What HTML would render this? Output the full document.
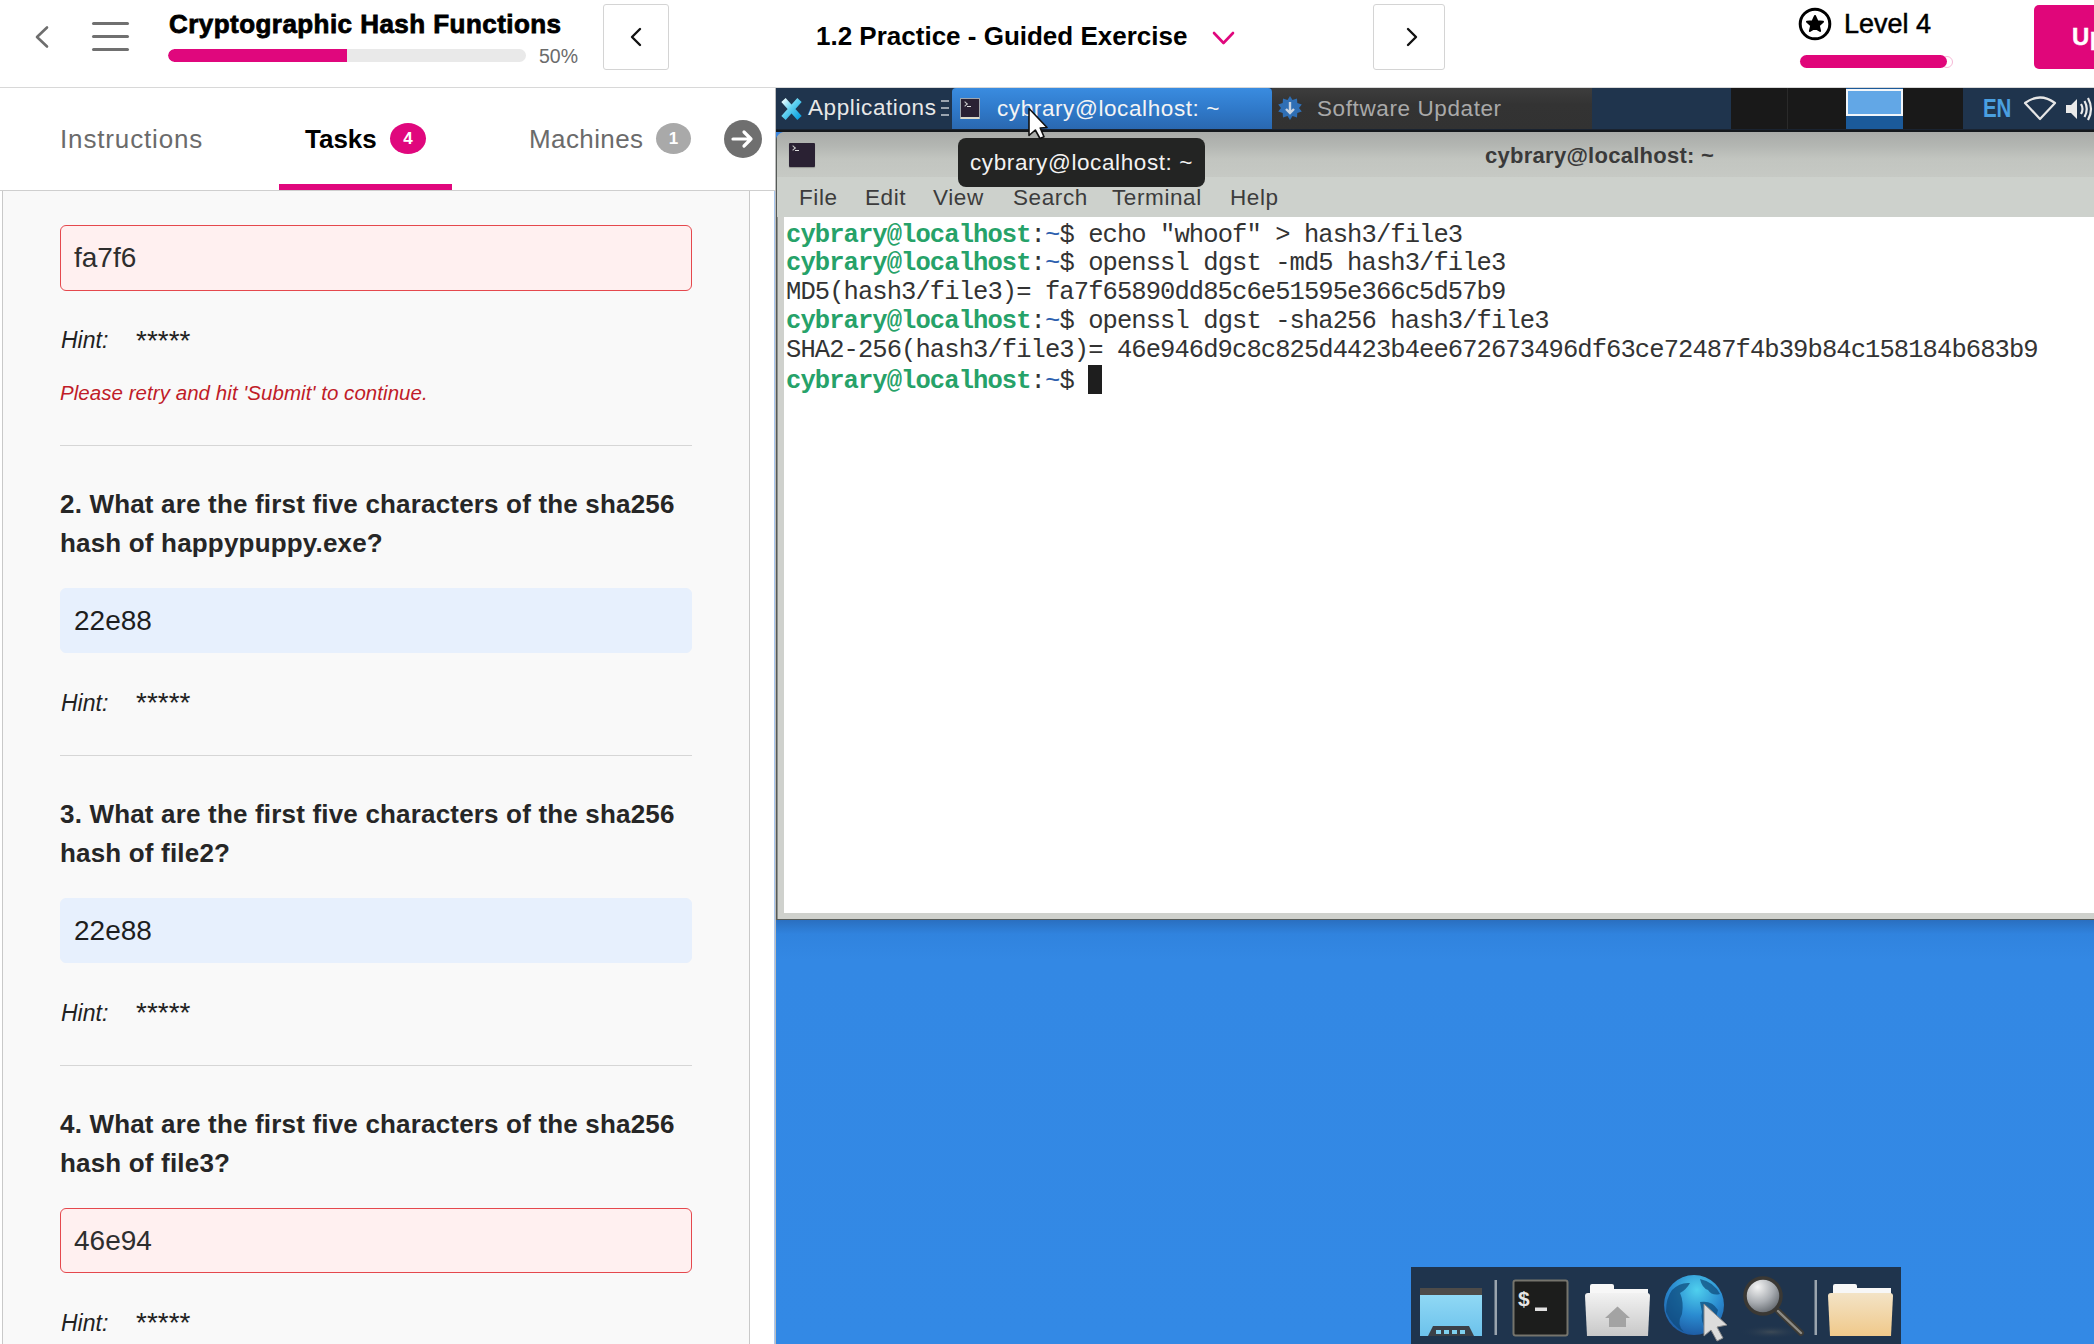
<!DOCTYPE html>
<html><head><meta charset="utf-8">
<style>
*{margin:0;padding:0;box-sizing:border-box}
html,body{width:2094px;height:1344px;overflow:hidden;background:#fff;font-family:"Liberation Sans",sans-serif;position:relative}
.abs{position:absolute}
/* header */
#hdr{left:0;top:0;width:2094px;height:88px;background:#fff;border-bottom:1px solid #d8d8d8}
.title{left:169px;top:9px;font-size:26px;font-weight:bold;color:#000;white-space:nowrap;letter-spacing:0.45px;-webkit-text-stroke:0.8px #000}
.pbar{left:168px;top:49px;width:358px;height:13px;border-radius:7px;background:#e9e9e9;overflow:hidden}
.pbar i{position:absolute;left:0;top:0;height:13px;width:179px;background:#e0077d;border-radius:7px 0 0 7px}
.pct{left:539px;top:45px;font-size:19.5px;color:#6b6b6b}
.nbtn{width:66px;height:66px;border:1px solid #d4d4d4;border-radius:3px;background:#fff}
.ctitle{left:816px;top:21px;font-size:26px;font-weight:bold;color:#000;white-space:nowrap}
.lvl{left:1844px;top:9px;font-size:27px;color:#000;white-space:nowrap;-webkit-text-stroke:0.5px #000}
.lbar{left:1800px;top:55px;width:147px;height:13px;border-radius:7px;background:#e0067a}
.upg{left:2034px;top:5px;width:80px;height:64px;background:#e0067a;border-radius:5px}
/* left panel */
#tabs{left:0;top:88px;width:776px;height:103px;background:#fff;border-bottom:1px solid #cfcfcf}
.tab{top:36px;font-size:26px;color:#6b6b6b;white-space:nowrap;letter-spacing:0.85px}
.badge{width:36px;height:31px;border-radius:50%;color:#fff;font-size:17px;font-weight:bold;text-align:center;line-height:31px}
#content{left:2px;top:191px;width:748px;height:1153px;background:#f9f9f9;border-left:1px solid #c9c9c9;border-right:1px solid #c9c9c9}
.inp{left:60px;width:632px;height:65.5px;border-radius:6px;font-size:28px;color:#1e1e1e;padding-left:13px;line-height:64px;letter-spacing:0px}
.inp.red{background:#fff0f0;border:1.5px solid #e5484d;color:#2e2e2e}
.inp.blue{background:#e7f0fd;border:1px solid #e7f0fd}
.hint{left:61px;font-size:23px;font-style:italic;color:#222}
.stars{left:134px;font-size:28px;color:#222;letter-spacing:0px}
.err{left:60px;top:381px;font-size:20.5px;font-style:italic;color:#c01c28;letter-spacing:0.05px}
.divl{left:60px;width:632px;height:1px;background:#d6d6d6}
.q{left:60px;width:700px;font-size:26px;font-weight:bold;color:#262626;line-height:39px;letter-spacing:0.18px}
/* VM */
#vm{left:776px;top:88px;width:1318px;height:1256px;background:#2f86e0;overflow:hidden}
.vmt{font-size:22.5px;letter-spacing:0.6px;white-space:nowrap}
.menu{color:#3c3c3c}
.ticon{background:#2a2133;border:1px solid #9ea6ae;border-bottom:2px solid #dcdacb;border-radius:1px}
.ticon:before{content:"";position:absolute;left:2px;top:2.5px;width:3px;height:3px;border-right:1.5px solid #ccc;border-top:1.5px solid #ccc;transform:rotate(45deg)}
.ticon:after{content:"";position:absolute;left:6px;top:6.5px;width:4px;height:1.6px;background:#ddd}
.term{font-family:"Liberation Mono",monospace;font-size:25.5px;letter-spacing:-0.915px;line-height:28.8px;color:#333}
.term div{white-space:pre;height:28.8px}
.term b{color:#26a269;font-weight:bold}
.term .bl{color:#2d5fae}
.cur{display:inline-block;width:14px;height:28.5px;background:#1e1e1e;vertical-align:-6px}
</style></head>
<body>
<div id="hdr" class="abs"></div>
<!-- back chevron -->
<svg class="abs" style="left:30px;top:20px" width="26" height="34" viewBox="0 0 26 34"><path d="M17 7.5 L7 17 L17 26.5" fill="none" stroke="#6e6e6e" stroke-width="2.6" stroke-linecap="round" stroke-linejoin="round"/></svg>
<!-- hamburger -->
<div class="abs" style="left:92px;top:22px;width:37px;height:3.4px;background:#707070;border-radius:2px"></div>
<div class="abs" style="left:92px;top:35px;width:37px;height:3.4px;background:#707070;border-radius:2px"></div>
<div class="abs" style="left:92px;top:48px;width:37px;height:3.4px;background:#707070;border-radius:2px"></div>
<div class="abs title">Cryptographic Hash Functions</div>
<div class="abs pbar"><i></i></div>
<div class="abs pct">50%</div>
<div class="abs nbtn" style="left:603px;top:4px"></div>
<svg class="abs" style="left:622px;top:24px" width="30" height="30" viewBox="0 0 30 30"><path d="M18 5 L10 13 L18 21" fill="none" stroke="#111" stroke-width="2.4" stroke-linecap="round" stroke-linejoin="round"/></svg>
<div class="abs ctitle">1.2 Practice - Guided Exercise</div>
<svg class="abs" style="left:1211px;top:29px" width="26" height="20" viewBox="0 0 26 20"><path d="M3 4 L12.5 14 L22 4" fill="none" stroke="#e0077d" stroke-width="2.6" stroke-linecap="round" stroke-linejoin="round"/></svg>
<div class="abs nbtn" style="left:1373px;top:4px;width:72px"></div>
<svg class="abs" style="left:1398px;top:24px" width="30" height="30" viewBox="0 0 30 30"><path d="M10 5 L18 13 L10 21" fill="none" stroke="#111" stroke-width="2.4" stroke-linecap="round" stroke-linejoin="round"/></svg>
<svg class="abs" style="left:1798px;top:7px" width="34" height="34" viewBox="0 0 34 34"><circle cx="17" cy="17" r="14.8" fill="none" stroke="#000" stroke-width="3"/><path d="M17 9 L19.4 14.2 L25 14.7 L20.8 18.4 L22.1 24 L17 21 L11.9 24 L13.2 18.4 L9 14.7 L14.6 14.2 Z" fill="#000" stroke="#000" stroke-width="2" stroke-linejoin="round"/></svg>
<div class="abs lvl">Level 4</div>
<div class="abs" style="left:1941px;top:56px;width:12px;height:12px;border-radius:50%;border:1px solid #f6b8d6"></div><div class="abs lbar"></div>
<div class="abs upg"></div>
<div class="abs" style="left:2072px;top:23px;font-size:24px;font-weight:bold;color:#fff;letter-spacing:0.5px;-webkit-text-stroke:0.4px #fff">Up</div>

<!-- tabs -->
<div id="tabs" class="abs"></div>
<div class="abs tab" style="left:60px;top:124px">Instructions</div>
<div class="abs tab" style="left:305px;top:124px;color:#000;font-weight:bold;letter-spacing:0">Tasks</div>
<div class="abs badge" style="left:390px;top:123px;background:#e0077d">4</div>
<div class="abs" style="left:279px;top:184px;width:173px;height:6px;background:#e0077d"></div>
<div class="abs tab" style="left:529px;top:124px;letter-spacing:0.4px">Machines</div>
<div class="abs badge" style="left:656px;top:123px;background:#a9a9a9;width:35px">1</div>
<div class="abs" style="left:724px;top:120px;width:38px;height:38px;border-radius:50%;background:#6f6f6f"></div>
<svg class="abs" style="left:724px;top:120px" width="38" height="38" viewBox="0 0 38 38"><path d="M9 19 H27 M20 12 L27 19 L20 26" fill="none" stroke="#fff" stroke-width="3.2" stroke-linecap="round" stroke-linejoin="round"/></svg>

<div id="content" class="abs"></div>
<div class="abs" style="left:774px;top:191px;width:1px;height:1153px;background:#a9c8f0"></div>
<div class="abs" style="left:775px;top:88px;width:1px;height:1256px;background:#bdbdbd"></div>

<!-- Q1 tail -->
<div class="abs inp red" style="top:225px">fa7f6</div>
<div class="abs hint" style="top:327px">Hint:</div>
<div class="abs stars" style="top:325px;left:136px">*****</div>
<div class="abs err">Please retry and hit 'Submit' to continue.</div>
<div class="abs divl" style="top:445px"></div>

<div class="abs q" style="top:485px">2. What are the first five characters of the sha256<br>hash of happypuppy.exe?</div>
<div class="abs inp blue" style="top:587.5px">22e88</div>
<div class="abs hint" style="top:690px">Hint:</div>
<div class="abs stars" style="top:687px;left:136px">*****</div>
<div class="abs divl" style="top:755px"></div>

<div class="abs q" style="top:795px">3. What are the first five characters of the sha256<br>hash of file2?</div>
<div class="abs inp blue" style="top:897.5px">22e88</div>
<div class="abs hint" style="top:1000px">Hint:</div>
<div class="abs stars" style="top:997px;left:136px">*****</div>
<div class="abs divl" style="top:1065px"></div>

<div class="abs q" style="top:1105px">4. What are the first five characters of the sha256<br>hash of file3?</div>
<div class="abs inp red" style="top:1207.5px">46e94</div>
<div class="abs hint" style="top:1310px">Hint:</div>
<div class="abs stars" style="top:1307px;left:136px">*****</div>

<!-- VM -->
<div id="vm" class="abs"></div>
<!-- VM panel -->
<div class="abs" style="left:776px;top:88px;width:1318px;height:42px;background:#1f344d"></div>
<div class="abs" style="left:776px;top:129px;width:1318px;height:1px;background:#1a2330"></div><div class="abs" style="left:776px;top:130px;width:1318px;height:2px;background:#14181c"></div>
<svg class="abs" style="left:779px;top:96px" width="25" height="25" viewBox="0 0 25 25"><defs><linearGradient id="xg" x1="0" y1="0" x2="1" y2="1"><stop offset="0" stop-color="#e6fbff"/><stop offset="0.45" stop-color="#5fd0f0"/><stop offset="1" stop-color="#0aa0e0"/></linearGradient></defs><path d="M4.5 4 L20.5 22 M20.5 4 L4.5 22" stroke="url(#xg)" stroke-width="5.8" stroke-linecap="butt"/></svg>
<div class="abs vmt" style="left:808px;top:95px;color:#e8e8e8">Applications</div>
<div class="abs" style="left:941px;top:100px;width:8px;height:2px;background:#9aa4b0"></div>
<div class="abs" style="left:941px;top:107px;width:8px;height:2px;background:#9aa4b0"></div>
<div class="abs" style="left:941px;top:114px;width:8px;height:2px;background:#9aa4b0"></div>
<div class="abs" style="left:952px;top:88px;width:320px;height:41px;background:linear-gradient(#3a8ce0,#2f78c8 55%,#2a68b0);border-radius:4px 4px 0 0"></div>
<div class="abs ticon" style="left:960px;top:98px;width:20px;height:21px"></div>
<div class="abs vmt" style="left:997px;top:96px;color:#f4f4f4">cybrary@localhost: ~</div>
<div class="abs" style="left:1272px;top:88px;width:320px;height:41px;background:linear-gradient(#3d3d3d,#333 40%,#323232)"></div>
<svg class="abs" style="left:1277px;top:95px" width="26" height="26" viewBox="0 0 26 26"><path d="M13 1 L15.5 5 L20 3.5 L20.3 8 L24.8 9.5 L22 13 L24.8 16.5 L20.3 18 L20 22.5 L15.5 21 L13 25 L10.5 21 L6 22.5 L5.7 18 L1.2 16.5 L4 13 L1.2 9.5 L5.7 8 L6 3.5 L10.5 5 Z" fill="#2f6fb5"/><path d="M13 7 V18 M9 14 L13 18 L17 14" stroke="#c8d4e2" stroke-width="2.4" fill="none"/></svg>
<div class="abs vmt" style="left:1317px;top:96px;color:#a9a9a9">Software Updater</div>
<div class="abs" style="left:1731px;top:88px;width:232px;height:41px;background:#191919"></div>
<div class="abs" style="left:1787px;top:88px;width:1px;height:41px;background:#2a2a2a"></div>
<div class="abs" style="left:1846px;top:88px;width:57px;height:41px;background:#1b5a9a"></div>
<div class="abs" style="left:1846px;top:89px;width:57px;height:27px;background:#62a7e6;border:2px solid #f2f6fa"></div>
<div class="abs" style="left:1983px;top:94px;font-size:25px;font-weight:bold;color:#4a9fe0;letter-spacing:-0.3px;transform:scaleX(0.82);transform-origin:left">EN</div>
<svg class="abs" style="left:2022px;top:95px" width="36" height="28" viewBox="0 0 36 28"><path d="M3 8 Q18 -3 33 8 L18 24 Z" fill="none" stroke="#e6e6e6" stroke-width="2.2" stroke-linejoin="round"/></svg>
<svg class="abs" style="left:2064px;top:94px" width="30" height="30" viewBox="0 0 30 30"><path d="M2 11 H7 L13 5 V25 L7 19 H2 Z" fill="#eaeaea"/><path d="M17 10 Q20 15 17 20 M20.5 7 Q25 15 20.5 23 M24 4 Q30 15 24 26" fill="none" stroke="#eaeaea" stroke-width="2.2"/></svg>

<!-- terminal window -->
<div class="abs" style="left:776px;top:132px;width:1318px;height:789px;background:#cfd1cd;border-left:1px solid #555a57;box-shadow:inset 1px 0 #8f928e"></div>
<div class="abs" style="left:777px;top:132px;width:1317px;height:45px;background:linear-gradient(#a9aba8,#b3b6b2 30%,#c2c5c0 60%,#c6c9c4)"></div>
<div class="abs ticon" style="left:789px;top:143px;width:26px;height:24px;border:none;box-shadow:0 1px 1px rgba(0,0,0,0.25)"></div>
<svg class="abs" style="left:776px;top:132px" width="8" height="8" viewBox="0 0 8 8"><path d="M0 0 H7 Q1.5 1.5 0 7 Z" fill="#3a86df"/></svg>
<div class="abs vmt" style="left:1485px;top:143px;color:#3a3a3a;font-weight:bold;font-size:22px;letter-spacing:0.27px">cybrary@localhost: ~</div>
<div class="abs" style="left:777px;top:177px;width:1317px;height:40px;background:#cdd1cc"></div>
<div class="abs vmt menu" style="left:799px;top:185px">File</div>
<div class="abs vmt menu" style="left:865px;top:185px">Edit</div>
<div class="abs vmt menu" style="left:933px;top:185px">View</div>
<div class="abs vmt menu" style="left:1013px;top:185px">Search</div>
<div class="abs vmt menu" style="left:1112px;top:185px">Terminal</div>
<div class="abs vmt menu" style="left:1230px;top:185px">Help</div>
<div class="abs" style="left:784px;top:217px;width:1310px;height:696px;background:#fff"></div>
<div class="abs" style="left:776px;top:919px;width:1318px;height:1px;background:#585c59"></div>
<div class="abs term" style="left:786px;top:221.5px">
<div><b>cybrary@localhost</b>:<span class="bl">~</span>$ echo "whoof" &gt; hash3/file3</div>
<div><b>cybrary@localhost</b>:<span class="bl">~</span>$ openssl dgst -md5 hash3/file3</div>
<div>MD5(hash3/file3)= fa7f65890dd85c6e51595e366c5d57b9</div>
<div><b>cybrary@localhost</b>:<span class="bl">~</span>$ openssl dgst -sha256 hash3/file3</div>
<div>SHA2-256(hash3/file3)= 46e946d9c8c825d4423b4ee672673496df63ce72487f4b39b84c158184b683b9</div>
<div><b>cybrary@localhost</b>:<span class="bl">~</span>$ <span class="cur"></span></div>
</div>
<!-- tooltip -->
<div class="abs" style="left:958px;top:138px;width:247px;height:49px;background:#232423;border-radius:8px"></div>
<div class="abs vmt" style="left:970px;top:150px;color:#f2f2f2">cybrary@localhost: ~</div>
<!-- mouse cursor -->
<svg class="abs" style="left:1026px;top:105px" width="26" height="36" viewBox="0 0 26 36"><path d="M3 3.5 L3 30.5 L9.3 25 L14 33.5 L18 31.8 L14.2 23 L21 22.5 Z" fill="#fff" stroke="#111" stroke-width="1.6" stroke-linejoin="round"/></svg>

<!-- desktop gradient overlay -->
<div class="abs" style="left:776px;top:920px;width:1318px;height:424px;background:linear-gradient(#2a6fc0,#3083de 14px,#3388e4 40px,#3389e5)"></div>
<!-- dock -->

<div class="abs" style="left:1411px;top:1267px;width:490px;height:77px;background:#1f344d"></div>
<!-- dock icon 1: show desktop -->
<svg class="abs" style="left:1411px;top:1267px" width="490" height="77" viewBox="1411 1267 490 77">
<defs>
<linearGradient id="sd" x1="0" y1="0" x2="0" y2="1"><stop offset="0" stop-color="#96dcf6"/><stop offset="1" stop-color="#6cc2ec"/></linearGradient>
<radialGradient id="gg" cx="0.55" cy="0.25" r="0.85"><stop offset="0" stop-color="#4fd0ee"/><stop offset="0.5" stop-color="#2a8bd0"/><stop offset="1" stop-color="#1a4f98"/></radialGradient>
<radialGradient id="mg" cx="0.35" cy="0.25" r="0.8"><stop offset="0" stop-color="#f4f4f4"/><stop offset="0.55" stop-color="#a9adb2"/><stop offset="1" stop-color="#5d6268"/></radialGradient>
<linearGradient id="fg1" x1="0" y1="0" x2="0" y2="1"><stop offset="0" stop-color="#f2f2f2"/><stop offset="1" stop-color="#c8c8c8"/></linearGradient>
<linearGradient id="fg2" x1="0" y1="0" x2="0" y2="1"><stop offset="0" stop-color="#f3e3c6"/><stop offset="1" stop-color="#f0c98a"/></linearGradient>
<radialGradient id="shd" cx="0.5" cy="0.5" r="0.5"><stop offset="0" stop-color="#3d4a56"/><stop offset="1" stop-color="#1f344d" stop-opacity="0"/></radialGradient>
</defs>
<rect x="1420" y="1288" width="62" height="48" fill="url(#sd)"/>
<rect x="1420" y="1288" width="62" height="7" fill="#4d4b49"/>
<path d="M1428 1336 L1433 1326 H1469 L1474 1336 Z" fill="#3b4048"/>
<rect x="1436" y="1330" width="5" height="4" fill="#7fd0f0"/><rect x="1444" y="1330" width="5" height="4" fill="#7fd0f0"/><rect x="1452" y="1330" width="5" height="4" fill="#7fd0f0"/><rect x="1460" y="1330" width="5" height="4" fill="#7fd0f0"/>
<rect x="1494.5" y="1280" width="2.5" height="55" fill="#9aa4ae"/>
<rect x="1513.5" y="1280.5" width="54" height="55" rx="2" fill="#1c1d1c" stroke="#75746c" stroke-width="2"/>
<text x="1518" y="1306" font-family="Liberation Sans" font-weight="bold" font-size="21" fill="#e6e6e6">$</text>
<rect x="1535" y="1307.5" width="12" height="3.5" fill="#e0e0e0"/>
<path d="M1590 1296 V1286 Q1590 1284 1592 1284 H1612 Q1614 1284 1614 1286 V1289 H1648 V1296 Z" fill="#f7f7f7"/>
<path d="M1585 1296 Q1585 1293 1588 1293 H1647 Q1650 1293 1650 1296 L1648 1336 H1587 Z" fill="url(#fg1)"/>
<path d="M1617.5 1306.5 L1605 1318 H1609 V1327 H1626 V1318 H1630 Z" fill="#a3a3a3"/>
<circle cx="1694" cy="1305" r="30" fill="url(#gg)"/>
<path d="M1672 1290 Q1680 1282 1690 1283 Q1686 1290 1680 1293 Q1684 1302 1682 1314 Q1676 1324 1684 1332 Q1672 1326 1666 1312 Q1666 1298 1672 1290 Z M1700 1279 Q1714 1282 1720 1294 Q1712 1296 1708 1290 Q1702 1288 1700 1279 Z M1700 1302 Q1712 1300 1718 1310 Q1716 1322 1706 1330 Q1700 1320 1702 1312 Z" fill="#0d4778" opacity="0.7"/>
<path d="M1704 1304 L1704 1336 L1711 1330 L1717 1341 L1723 1338 L1717 1327 L1727 1325 Z" fill="#dcdcdc" stroke="#8a8a8a" stroke-width="1"/>
<ellipse cx="1771" cy="1332" rx="32" ry="7" fill="url(#shd)"/>
<line x1="1778" y1="1311" x2="1801" y2="1333" stroke="#3b3a36" stroke-width="6" stroke-linecap="round"/>
<line x1="1778" y1="1311" x2="1801" y2="1333" stroke="#8d8b84" stroke-width="2.4" stroke-linecap="round"/>
<circle cx="1763" cy="1296" r="18" fill="url(#mg)" stroke="#3a3834" stroke-width="3.5"/>
<rect x="1814.5" y="1280" width="2.5" height="55" fill="#9aa4ae"/>
<path d="M1833 1294 V1286 Q1833 1284 1835 1284 H1855 Q1857 1284 1857 1286 V1288 H1891 V1294 Z" fill="#f7f7f7"/>
<path d="M1828 1296 Q1828 1293 1831 1293 H1890 Q1893 1293 1893 1296 L1891 1336 H1830 Z" fill="url(#fg2)"/>
</svg>
</body></html>
